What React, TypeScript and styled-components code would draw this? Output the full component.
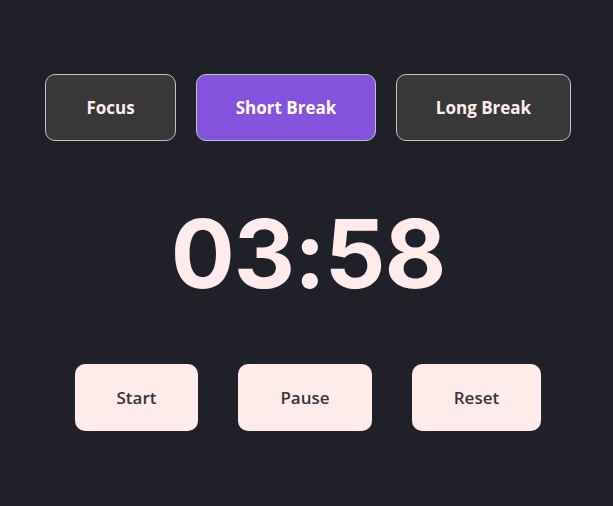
import React from "react";
import styled, { createGlobalStyle, css } from "styled-components";

const Global = createGlobalStyle`
  html, body { margin: 0; padding: 0; background: #1f2029; }
  body { font-family: "Open Sans", "Liberation Sans", sans-serif; }
`;

const Page = styled.div`
  width: 613px;
  height: 506px;
  box-sizing: border-box;
  background: #1f2029;
  display: flex;
  flex-direction: column;
  align-items: center;
  padding-top: 74px;
  padding-left: 3px;
`;

const ModeBar = styled.div`
  display: flex;
  gap: 20px;
`;

const ModeButton = styled.button<{ $active?: boolean; $w: number }>`
  box-sizing: border-box;
  width: ${(p) => p.$w}px;
  height: 67px;
  border-radius: 10px;
  border: 1px solid #c4c4c4;
  background: #383838;
  color: #ffeeee;
  font-family: "Open Sans", "Liberation Sans", sans-serif;
  font-weight: 700;
  font-size: 17px;
  ${(p) =>
    p.$active &&
    css`
      background: #8452dd;
      color: #ffffff;
    `}
`;

const Timer = styled.div`
  margin-top: 60px;
  height: 104px;
  display: flex;
  align-items: center;
  color: #ffebea;
  font-family: "Inter", "Roboto", sans-serif;
  font-weight: 700;
  font-size: 95px;
  letter-spacing: -1px;
  line-height: 1;
`;

const Controls = styled.div`
  margin-top: 59px;
  display: flex;
  gap: 40px;
`;

const ControlButton = styled.button<{ $w: number }>`
  box-sizing: border-box;
  width: ${(p) => p.$w}px;
  height: 67px;
  border-radius: 10px;
  border: none;
  background: #ffebea;
  color: #36363a;
  font-family: "Open Sans", "Liberation Sans", sans-serif;
  font-weight: 600;
  font-size: 17px;
`;

export default function App() {
  return (
    <>
      <Global />
      <Page>
        <ModeBar>
          <ModeButton $w={131}>Focus</ModeButton>
          <ModeButton $w={180} $active>
            Short Break
          </ModeButton>
          <ModeButton $w={175}>Long Break</ModeButton>
        </ModeBar>
        <Timer>03:58</Timer>
        <Controls>
          <ControlButton $w={123}>Start</ControlButton>
          <ControlButton $w={134}>Pause</ControlButton>
          <ControlButton $w={129}>Reset</ControlButton>
        </Controls>
      </Page>
    </>
  );
}
